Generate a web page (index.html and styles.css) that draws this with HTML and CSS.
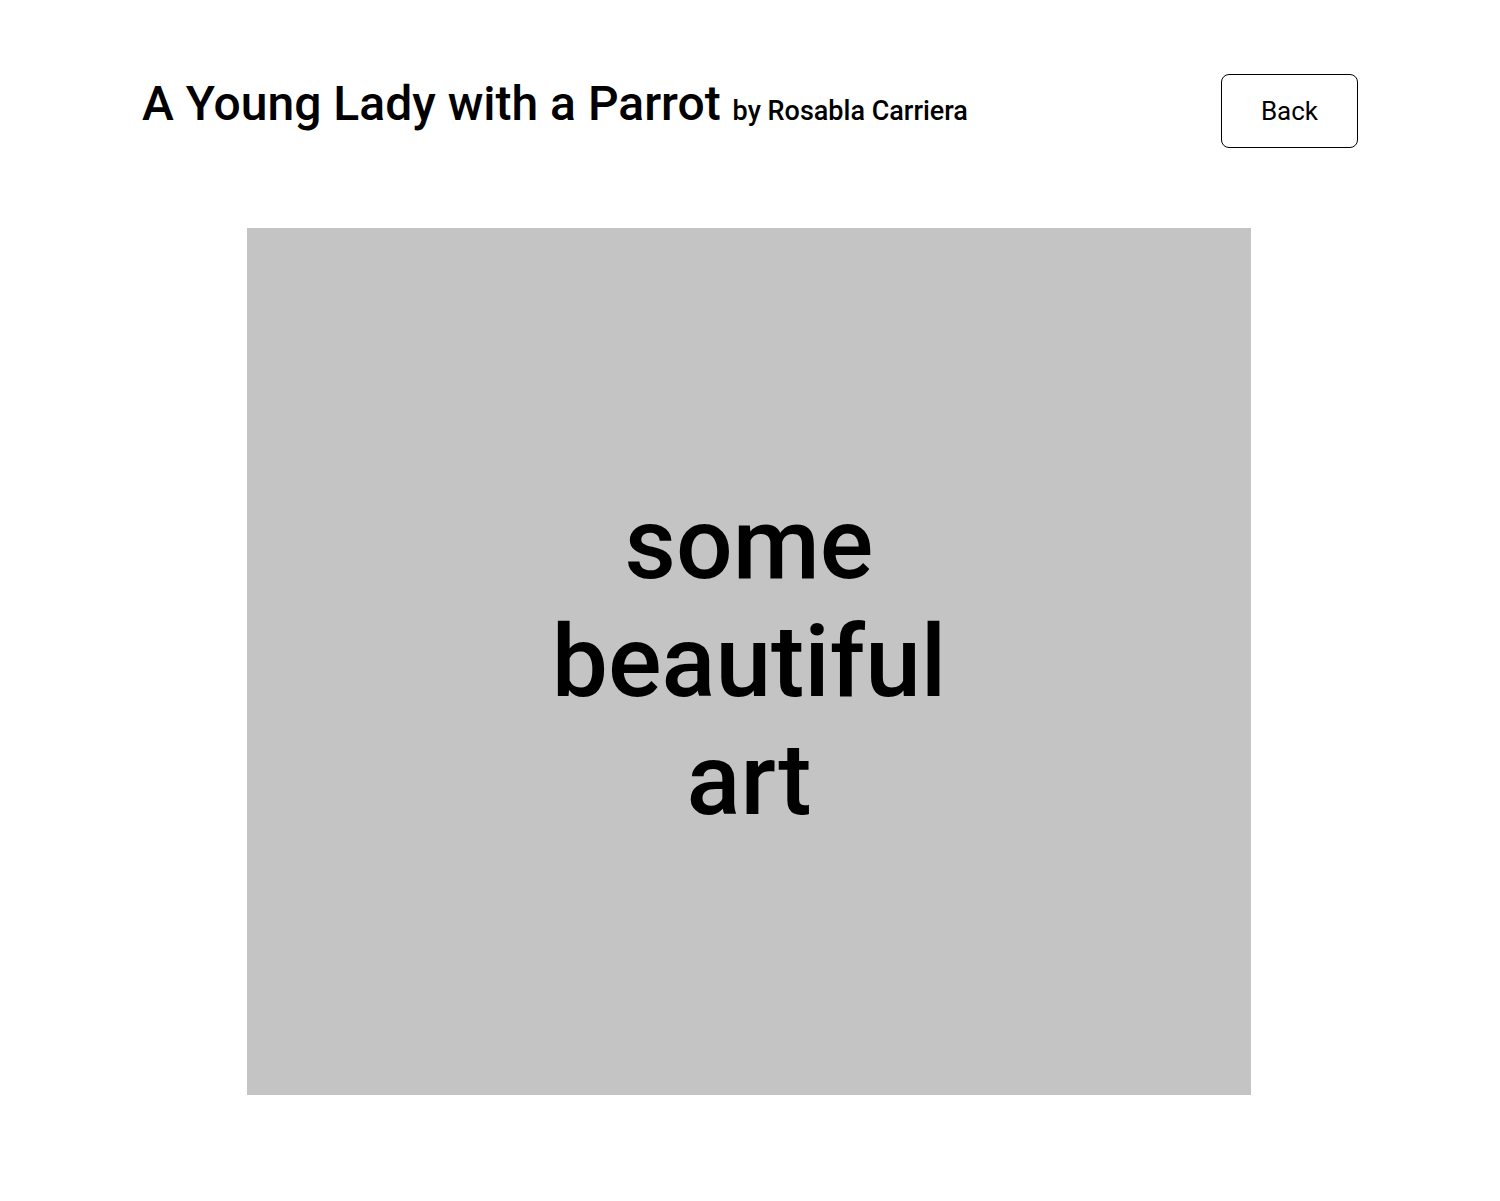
FILE: index.html
```html
<!DOCTYPE html>
<html lang="en">
<head>
<meta charset="utf-8">
<title>A Young Lady with a Parrot</title>
<link rel="stylesheet" href="styles.css">
</head>
<body>
<div class="page">
  <header class="header">
    <h1 class="title">A Young Lady with a Parrot <span class="artist">by Rosabla Carriera</span></h1>
    <button class="back">Back</button>
  </header>
  <main class="art-wrap">
    <div class="art">
      <p class="art-text">some<br>beautiful<br>art</p>
    </div>
  </main>
</div>
</body>
</html>
```
FILE: styles.css
```css
html, body {
  margin: 0;
  padding: 0;
  background: #ffffff;
  font-family: Roboto, "Liberation Sans", sans-serif;
  color: #000;
}
.page {
  width: 1216px;
  margin: 0 auto;
  padding-top: 74px;
}
.header {
  display: flex;
  justify-content: space-between;
  align-items: flex-start;
}
.title {
  margin: 0;
  font-size: 48px;
  font-weight: 500;
  line-height: 60px;
}
.artist {
  font-size: 27px;
  font-weight: 500;
}
.back {
  width: 137px;
  height: 74px;
  border: 1.5px solid #000;
  border-radius: 8px;
  background: #fff;
  font-family: Roboto, "Liberation Sans", sans-serif;
  font-size: 26px;
  font-weight: 400;
  color: #000;
  cursor: pointer;
}
.art-wrap {
  display: flex;
  justify-content: center;
  margin-top: 80px;
  padding-right: 2px;
}
.art {
  width: 1004px;
  height: 867px;
  background: #c4c4c4;
  display: flex;
  align-items: center;
  justify-content: center;
}
.art-text {
  margin: 0;
  text-align: center;
  font-size: 100px;
  font-weight: 500;
  line-height: 118px;
}
```
